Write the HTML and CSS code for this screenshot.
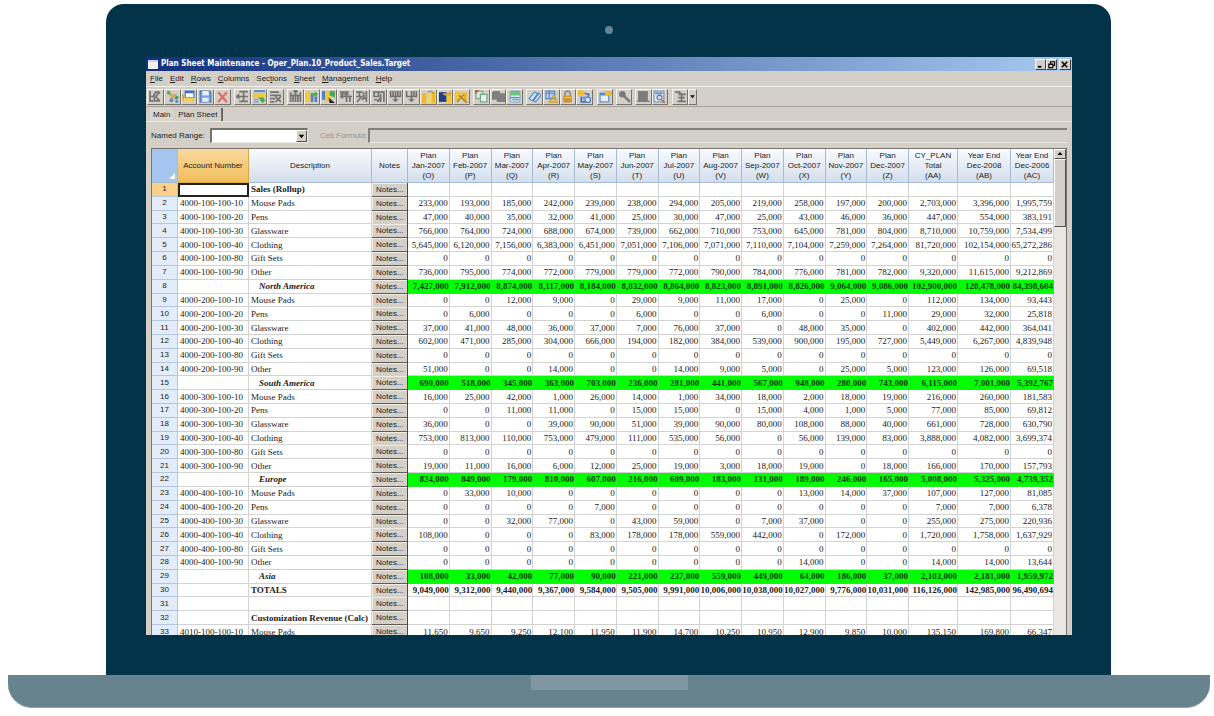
FILE: index.html
```html
<!DOCTYPE html>
<html lang="en">
<head>
<meta charset="utf-8">
<title>Plan Sheet Maintenance</title>
<link rel="stylesheet" href="styles.css">
</head>
<body>
<main class="laptop">
  <div class="lid">
    <span class="camera"></span>
    <section class="window">
      <header class="titlebar">
        <svg class="app-icon" viewBox="0 0 10 9"><rect width="10" height="9" fill="#f4f1ea"/><rect width="10" height="2" fill="#c9d3ec"/></svg>
        <h1 class="title">Plan Sheet Maintenance - Oper_Plan.10_Product_Sales.Target</h1>
        <div class="win-buttons">
          <button class="win-btn" aria-label="Minimize"><svg viewBox="0 0 10 9"><path d="M2 7h4" stroke="#000" stroke-width="2"/></svg></button>
          <button class="win-btn" aria-label="Restore"><svg viewBox="0 0 10 9"><path d="M4 3.5V1.500h4.500v4H7M4 1.500h4.500M2 4h4.500v4H2zM2 4.500h4.500" fill="none" stroke="#000" stroke-width="1.200"/></svg></button>
          <button class="win-btn win-close" aria-label="Close"><svg viewBox="0 0 10 9"><path d="M2 1.500l6 6M8 1.500l-6 6" stroke="#000" stroke-width="1.700"/></svg></button>
        </div>
      </header>

      <nav class="menubar">
        <button><u>F</u>ile</button>
        <button><u>E</u>dit</button>
        <button><u>R</u>ows</button>
        <button><u>C</u>olumns</button>
        <button>Sec<u>t</u>ions</button>
        <button><u>S</u>heet</button>
        <button><u>M</u>anagement</button>
        <button><u>H</u>elp</button>
      </nav>

      <div class="toolbar">
        <div class="group five">
          <button class="tool" aria-label="Refresh"><svg viewBox="0 0 12 12"><path d="M1 1v9h3M1 6h3l2-4h4M10 2L6 6M5 6v4h5M6 6l4 4" class="g"/></svg></button>
          <button class="tool" aria-label="New sheet"><svg viewBox="0 0 12 12"><path d="M2 3l4 3 4-2M6 6l-2 4M6 6l4 3" stroke="#7f9c8a" fill="none"/><circle cx="2.500" cy="2.500" r="1.700" fill="#58a868"/><circle cx="6" cy="5.500" r="2" fill="#e0b040"/><circle cx="10" cy="7" r="1.600" fill="#4a9e5c"/><circle cx="5" cy="9.500" r="1.800" fill="#5c8fd0"/><circle cx="10" cy="10.500" r="1.500" fill="#5c8fd0"/></svg></button>
          <button class="tool" aria-label="Open"><svg viewBox="0 0 12 12"><rect x="3" y="1" width="8" height="6" fill="#fff" stroke="#3a6cc0"/><path d="M3 2h8" stroke="#3a6cc0" stroke-width="2"/><path d="M0 4l2 1v4h9l-1 2H1z" fill="#d89a20"/><path d="M2 7h9l-1 4H1z" fill="#f4d050"/></svg></button>
          <button class="tool" aria-label="Save"><svg viewBox="0 0 12 12"><path d="M1 1h9l1 1v9H1z" fill="#6f9fe0" stroke="#4472b8"/><rect x="3" y="1" width="6" height="4" fill="#eef4ff"/><rect x="3" y="7" width="6" height="4" fill="#dfe9f8"/></svg></button>
          <button class="tool" aria-label="Delete"><svg viewBox="0 0 12 12"><path d="M2 2l8 9M10 2l-8 9" stroke="#dc7068" stroke-width="2"/></svg></button>
        </div>
        <div class="group three">
          <button class="tool" aria-label="Insert row"><svg viewBox="0 0 12 12"><path d="M3 1.500h8M0 6h11M3 10.500h8M7 2v9M3 4L1 6l2 2" class="g"/></svg></button>
          <button class="tool" aria-label="Copy row"><svg viewBox="0 0 12 12"><rect x="1" y="0" width="10" height="2" fill="#5b8ccc"/><rect y="3" width="11" height="4" fill="#f3c73c"/><path d="M4 7h6v2h2l-3 3-3-3h1z" fill="#3fae4f"/><path d="M1 9h4M1 11h4" stroke="#5b8ccc"/></svg></button>
          <button class="tool" aria-label="Delete row"><svg viewBox="0 0 12 12"><path d="M1 2h8M1 5h10M1 8h5M1 11h4M6 6l5 5M11 6l-5 5" class="g"/></svg></button>
        </div>
        <div class="group eleven">
          <button class="tool" aria-label="Insert column"><svg viewBox="0 0 12 12"><path d="M1.500 2v9M6 0v11M10.500 2v9M1 5h10M4 2l2-2 2 2M3.800 5v6M8.200 5v6" class="g"/></svg></button>
          <button class="tool" aria-label="Add column"><svg viewBox="0 0 12 12"><rect x="0" y="1" width="5" height="10" fill="#f2c93f"/><path d="M6.500 3v8M10 6v5" stroke="#5182cc" stroke-width="2.500"/><path d="M6 3h3V1l3 3-3 3V5H6z" fill="#43ad51"/></svg></button>
          <button class="tool" aria-label="Select column"><svg viewBox="0 0 12 12"><rect width="3" height="8" x="0" y="1" fill="#5182cc"/><rect x="3" y="1" width="5" height="10" fill="#f2c93f"/><path d="M7 1h5v6L7 5z" fill="#48a958"/><path d="M6 7l6 5H7z" fill="#222"/></svg></button>
          <button class="tool" aria-label="Row group"><svg viewBox="0 0 12 12"><path d="M1 2h8M1 6h11M3 2v6M7 2v9M10 5v6M1 4h8" class="g"/></svg></button>
          <button class="tool" aria-label="Move left"><svg viewBox="0 0 12 12"><path d="M1 2h6M4 2v4M1 6h6M2 11l4-5M10.500 1v10M8 2v7M6 9l4-2" class="g"/></svg></button>
          <button class="tool" aria-label="Move right"><svg viewBox="0 0 12 12"><path d="M1 2h10v9M2 2v4h4V2M8 4v7M5 11l3-4M2 9h3" class="g"/></svg></button>
          <button class="tool" aria-label="Expand"><svg viewBox="0 0 12 12"><path d="M1.500 1v5h9V1M6 1v10M3.500 9h5M3.800 1v5M8.200 1v5" class="g"/></svg></button>
          <button class="tool" aria-label="Collapse"><svg viewBox="0 0 12 12"><path d="M1.500 1v5h9V1M6 1v10M3.500 9h5M8.200 1v5" class="g"/></svg></button>
          <button class="tool" aria-label="Highlight columns"><svg viewBox="0 0 12 12"><rect y="3" width="4" height="9" fill="#eeb92e"/><rect x="5" y="3" width="3" height="9" fill="#f6d65c"/><rect x="9" y="2" width="3" height="10" fill="#eeb92e"/><path d="M5 2l3-1 3 2" stroke="#b08a28" fill="none"/></svg></button>
          <button class="tool" aria-label="Fill column"><svg viewBox="0 0 12 12"><rect y="2" width="7" height="9" fill="#223f8a"/><rect x="7" y="4" width="4" height="8" fill="#f1c431"/><path d="M3 3h5l3-2v4H5z" fill="#dca92b"/></svg></button>
          <button class="tool" aria-label="Clear column"><svg viewBox="0 0 12 12"><rect y="2" width="4" height="9" fill="#f1c431"/><rect x="8" y="2" width="3" height="9" fill="#e6b42c"/><path d="M2 11l7-8M4 5l7 7" stroke="#b78425" stroke-width="1.500"/><path d="M3 2h7v2H3z" fill="#f1c431"/></svg></button>
        </div>
        <div class="group three">
          <button class="tool" aria-label="Copy"><svg viewBox="0 0 12 12"><rect x="1" y="1" width="6" height="7" fill="#d3e8d8" stroke="#7ca389"/><rect x="5" y="4" width="6" height="7" fill="#e2f2e6" stroke="#6c9f80"/><path d="M0 0h4L0 4z" fill="#c0554a"/></svg></button>
          <button class="tool" aria-label="Paste"><svg viewBox="0 0 12 12"><path d="M0 2l2-1h5l1 2h4v8H5l-1-2H0z" fill="#808080"/></svg></button>
          <button class="tool" aria-label="Calendar"><svg viewBox="0 0 12 12"><rect x="2" y="1" width="9" height="10" rx="1" fill="#d6eaf6" stroke="#7ea6cf"/><path d="M2 1h9v4H2z" fill="#6cc57c"/><path d="M2 7h8M4 9h6" stroke="#568bcc"/></svg></button>
        </div>
        <div class="group four">
          <button class="tool" aria-label="Attach"><svg viewBox="0 0 12 12"><path d="M1 8l5-6 3 1-5 7zM5 10l5-7 2 2-5 6z" fill="#dbe9fb" stroke="#4d83cb"/></svg></button>
          <button class="tool" aria-label="Exceptions"><svg viewBox="0 0 12 12"><rect x="1" y="1" width="8" height="7" fill="#bfd6f5" stroke="#4a7fca"/><path d="M1 3h8M4 1v7" stroke="#4a7fca"/><path d="M8 4l2 3.500H6zM5.500 8l2 3.500h-4zM10 8l2 3.500H8z" fill="#eebd28" stroke="#b98d20" stroke-width=".5"/></svg></button>
          <button class="tool" aria-label="Lock"><svg viewBox="0 0 12 12"><path d="M3.500 6V3.500a2.500 2.500 0 015 0V6" fill="none" stroke="#8c8c8c" stroke-width="1.500"/><rect x="2" y="5" width="8" height="6.500" rx="1" fill="#cf9428"/><path d="M3 7h6" stroke="#f4ce6c"/></svg></button>
          <button class="tool" aria-label="Links"><svg viewBox="0 0 12 12"><path d="M0 0l6 1v4L0 5z" fill="#efbd2e"/><path d="M6 3l4 1-1 3M3 6v5h4" fill="none" stroke="#3f74c4" stroke-width="1.500"/><circle cx="9" cy="9" r="2.500" fill="#d9e7fa" stroke="#3f74c4"/><path d="M4 6h3v3H4z" fill="#6f9fe0"/></svg></button>
        </div>
        <div class="group one gap-wide">
          <button class="tool" aria-label="Properties"><svg viewBox="0 0 12 12"><rect x="1" y="3" width="8" height="8" fill="#e6effb" stroke="#4e85d0"/><path d="M1 4h8" stroke="#4e85d0" stroke-width="2"/><path d="M5 1h7v4H6z" fill="#efbd2e"/></svg></button>
        </div>
        <div class="group one">
          <button class="tool" aria-label="Find"><svg viewBox="0 0 12 12"><circle cx="4" cy="4" r="3" fill="#7c7c7c"/><path d="M5 5l6 6" stroke="#7c7c7c" stroke-width="2.500"/></svg></button>
        </div>
        <div class="group two">
          <button class="tool" aria-label="Stop"><svg viewBox="0 0 12 12"><path d="M1 1h9v9h2v1H0v-1h1z" fill="#7c7c7c"/></svg></button>
          <button class="tool" aria-label="Preview"><svg viewBox="0 0 12 12"><rect x="1" y="1" width="9" height="10" fill="#e8eef8" stroke="#7893b8"/><path d="M2 3h7" stroke="#6e9bd8" stroke-width="2"/><circle cx="6" cy="7" r="2.300" fill="#c7dcf7" stroke="#7a6f75"/><path d="M8 9l3 3" stroke="#b06a50" stroke-width="1.500"/></svg></button>
        </div>
        <div class="group tail gap-wide">
          <button class="tool" aria-label="Tools"><svg viewBox="0 0 12 12"><path d="M1 2h5M4 4h7M7 3v7M4 7h6M3 10.500h8M5 2l2 3" class="g"/></svg></button>
          <button class="tool more" aria-label="More tools"><svg viewBox="0 0 12 12"><path d="M2 4h8L6 9z" fill="#000"/></svg></button>
        </div>
      </div>

      <div class="tabs">
        <button class="tab">Main</button>
        <button class="tab active">Plan Sheet</button>
      </div>

      <div class="panel">
        <div class="formula-row">
          <label for="range">Named Range:</label>
          <div class="select-box">
            <select id="range"><option></option></select>
            <svg class="select-arrow" viewBox="0 0 10 11"><path d="M2 4h6L5 8z" fill="#000"/></svg>
          </div>
          <label class="dim" for="formula">Cell Formula:</label>
          <input id="formula" type="text" disabled>
        </div>
        <div class="grid-view">
          <table class="sheet">
            <colgroup>
              <col class="c-num"><col class="c-acct"><col class="c-desc"><col class="c-notes">
              <col span="12">
              <col class="c-total"><col class="c-end"><col class="c-prior">
            </colgroup>
            <thead>
              <tr>
                <th class="corner"><svg viewBox="0 0 6 6"><path d="M6 0v6H0z" fill="#fff"/></svg></th>
                <th class="picked">Account Number</th>
                <th>Description</th>
                <th>Notes</th>
                <th>Plan<br>Jan-2007<br>(O)</th>
                <th>Plan<br>Feb-2007<br>(P)</th>
                <th>Plan<br>Mar-2007<br>(Q)</th>
                <th>Plan<br>Apr-2007<br>(R)</th>
                <th>Plan<br>May-2007<br>(S)</th>
                <th>Plan<br>Jun-2007<br>(T)</th>
                <th>Plan<br>Jul-2007<br>(U)</th>
                <th>Plan<br>Aug-2007<br>(V)</th>
                <th>Plan<br>Sep-2007<br>(W)</th>
                <th>Plan<br>Oct-2007<br>(X)</th>
                <th>Plan<br>Nov-2007<br>(Y)</th>
                <th>Plan<br>Dec-2007<br>(Z)</th>
                <th>CY_PLAN<br>Total<br>(AA)</th>
                <th>Year End<br>Dec-2008<br>(AB)</th>
                <th>Year End<br>Dec-2006<br>(AC)</th>
              </tr>
            </thead>
            <tbody id="rows"></tbody>
          </table>
          <div class="scrollbar">
            <button class="scroll-up" aria-label="Scroll up"><svg viewBox="0 0 9 8"><path d="M2 5h5L4.500 2z" fill="#000"/></svg></button>
            <div class="thumb"></div>
          </div>
        </div>
      </div>
    </section>
  </div>
  <div class="base"><span class="notch"></span></div>
</main>
<script src="sheet.js"></script>
</body>
</html>
```
FILE: styles.css
```css
* { box-sizing: border-box; }

body {
  margin: 0;
  padding: 4px 4px 8px 8px;
  background: #fff;
  font-family: "Liberation Sans", Arial, sans-serif;
  font-size: 8px;
  color: #222;
}

button, input, select {
  margin: 0;
  padding: 0;
  border: 0;
  border-radius: 0;
  background: none;
  font: inherit;
  color: inherit;
}

/* Laptop frame */
.laptop { display: flex; flex-direction: column; }
.lid {
  margin: 0 99px 0 98px;
  padding: 22px 39px 40px 40px;
  background: #023349;
  border-radius: 18px 18px 0 0;
  display: flex;
  flex-direction: column;
}
.camera {
  width: 8px;
  height: 8px;
  margin: 0 auto 23px;
  border-radius: 50%;
  background: #67838d;
}
.base {
  height: 33px;
  background: #67838d;
  border-bottom: 1px solid #8ba0aa;
  border-radius: 0 0 24px 24px;
  display: flex;
  justify-content: center;
}
.notch { width: 157px; height: 15px; background: #8097a2; }

/* Application window */
.window { background: #d4d0c8; overflow: hidden; }
.titlebar {
  display: flex;
  align-items: center;
  height: 14px;
  padding: 0 1px 0 2px;
  gap: 3px;
  background: linear-gradient(90deg, #12307c, #a6caf0);
}
.app-icon { width: 10px; height: 9px; }
.title {
  flex: 1;
  margin: 0;
  font-family: "DejaVu Sans Condensed", "DejaVu Sans", sans-serif;
  font-size: 8px;
  font-weight: bold;
  line-height: 14px;
  color: #fff;
  white-space: nowrap;
}
.win-buttons { display: flex; }
.win-btn {
  width: 11px;
  height: 11px;
  background: #d4d0c8;
  border: 1px solid;
  border-color: #fff #404040 #404040 #fff;
}
.win-btn svg { display: block; width: 9px; height: 9px; }
.win-close { margin-left: 2px; width: 12px; }

.menubar {
  display: flex;
  gap: 7px;
  height: 15px;
  padding: 0 4px;
  line-height: 14px;
}

.toolbar {
  display: flex;
  align-items: center;
  gap: 3px;
  height: 21px;
  padding: 0 1px;
  border-top: 1px solid #f2f0ec;
  border-bottom: 1px solid #a5a19a;
}
.group { display: flex; }
.one { width: 16px; }
.two { width: 33px; }
.three { width: 50px; }
.four { width: 67px; }
.five { width: 84px; }
.eleven { width: 183px; }
.tail { width: 25px; }
.gap-wide { margin-left: 1px; }
.tool {
  flex: 1;
  height: 16px;
  display: flex;
  align-items: center;
  justify-content: center;
  border: 1px solid;
  border-color: #f4f2ee #77736c #77736c #f4f2ee;
}
.tool svg { width: 13px; height: 13px; flex: none; }
.tool .g { fill: none; stroke: #747474; stroke-width: 1.6; }
.tool.more { flex: none; width: 9px; }
.tool.more svg { width: 7px; height: 7px; }

.tabs {
  display: flex;
  height: 15px;
  padding: 1px 4px 0;
  gap: 2px;
  border-bottom: 1px solid #eceae5;
}
.tab { padding: 0 3px; line-height: 14px; background: #dad6cf; }
.tab.active { padding-right: 4px; background: #d4d0c8; border-right: 2px solid #6a6762; }

.panel { padding: 0 5px; }
.formula-row {
  display: flex;
  align-items: center;
  height: 26px;
}
.formula-row label { width: 59px; white-space: nowrap; }
.formula-row .dim { width: 48px; margin-left: 12px; color: #98948d; }
.select-box { position: relative; width: 98px; height: 15px; }
.select-box select {
  width: 100%;
  height: 100%;
  appearance: none;
  background: #fff;
  border: 1px solid;
  border-width: 2px 1px 1px 2px;
  border-color: #77736c #eceae5 #eceae5 #77736c;
}
.select-arrow {
  position: absolute;
  top: 2px;
  right: 1px;
  width: 11px;
  height: 12px;
  background: #d4d0c8;
  border: 1px solid;
  border-color: #fff #55524d #55524d #fff;
  pointer-events: none;
}
#formula {
  flex: 1;
  min-width: 0;
  height: 15px;
  border: 1px solid;
  border-width: 2px 0 1px 2px;
  border-color: #85817a #eceae5 #eceae5 #85817a;
}

/* Worksheet */
.grid-view {
  display: flex;
  height: 487px;
  overflow: hidden;
  border: solid #77736c;
  border-width: 1px 1px 0 1px;
}
.sheet {
  flex: 1;
  width: 100%;
  height: 490px;
  table-layout: fixed;
  border-collapse: separate;
  border-spacing: 0;
  background: #fff;
  font-family: "Liberation Serif", "Times New Roman", serif;
  font-size: 9px;
  line-height: 12px;
}
.c-num { width: 26px; }
.c-acct { width: 71px; }
.c-desc { width: 123px; }
.c-notes { width: 36px; }
.c-total { width: 49px; }
.c-end { width: 53px; }
.c-prior { width: 43px; }

.sheet th, .sheet td {
  padding: 0;
  border: solid #d3d3d3;
  border-width: 0 1px 1px 0;
  white-space: nowrap;
}
.sheet th {
  font: 8px/10px "Liberation Sans", Arial, sans-serif;
  text-align: center;
}
.sheet thead th {
  height: 34px;
  background: linear-gradient(#f8fbff, #d3deec);
  border-color: #a9bbd2;
}
.sheet thead .picked {
  background: linear-gradient(#fad9a0, #f0be5a);
  border-color: #d9a648;
}
.sheet thead .corner {
  background: #a3c5ee;
  text-align: right;
  vertical-align: bottom;
}
.corner svg { width: 6px; height: 6px; margin: 0 2px 0 0; display: inline-block; }
.sheet tbody th { background: #e3edf9; border-color: #b3c6de; }
.sheet tbody .picked { background: #fbd08a; }
.sheet td { text-align: right; padding-right: 1px; }
.sheet .text { text-align: left; padding-left: 2px; }
.sheet .cursor { border: 2px solid #222; }
.sheet .note-cell {
  padding: 0;
  background: #5f5c58;
  border-color: #4d4a47;
  border-bottom: 0;
  vertical-align: top;
}
.note {
  display: block;
  width: 100%;
  height: 13px;
  font: 8px/12px "Liberation Sans", Arial, sans-serif;
  text-align: left;
  padding-left: 3px;
  background: #d4d0c8;
  border: solid #efece6;
  border-width: 1px 0 0 1px;
}
.strong td { font-weight: bold; padding-right: 0; }
.section .text { font-weight: bold; }
.sheet .region .text { font-style: italic; padding-left: 10px; }
.sheet .region .num { background: #00ff00; border-color: #2fe32f; color: #003c00; }

.scrollbar { width: 12px; flex: none; background: #e9e7e3; }
.scroll-up, .thumb {
  display: block;
  width: 12px;
  background: #d4d0c8;
  border: 1px solid;
  border-color: #fff #55524d #55524d #fff;
}
.scroll-up { height: 10px; }
.scroll-up svg { display: block; width: 10px; height: 8px; }
.thumb { height: 68px; }
```
FILE: sheet.js
```js
// kind | account | description | values
const data = [
  "section||Sales (Rollup)|",
  "|4000-100-100-10|Mouse Pads|233,000 193,000 185,000 242,000 239,000 238,000 294,000 205,000 219,000 258,000 197,000 200,000 2,703,000 3,396,000 1,995,759",
  "|4000-100-100-20|Pens|47,000 40,000 35,000 32,000 41,000 25,000 30,000 47,000 25,000 43,000 46,000 36,000 447,000 554,000 383,191",
  "|4000-100-100-30|Glassware|766,000 764,000 724,000 688,000 674,000 739,000 662,000 710,000 753,000 645,000 781,000 804,000 8,710,000 10,759,000 7,534,499",
  "|4000-100-100-40|Clothing|5,645,000 6,120,000 7,156,000 6,383,000 6,451,000 7,051,000 7,106,000 7,071,000 7,110,000 7,104,000 7,259,000 7,264,000 81,720,000 102,154,000 65,272,286",
  "|4000-100-100-80|Gift Sets|0 0 0 0 0 0 0 0 0 0 0 0 0 0 0",
  "|4000-100-100-90|Other|736,000 795,000 774,000 772,000 779,000 779,000 772,000 790,000 784,000 776,000 781,000 782,000 9,320,000 11,615,000 9,212,869",
  "strong region||North America|7,427,000 7,912,000 8,874,000 8,117,000 8,184,000 8,832,000 8,864,000 8,823,000 8,891,000 8,826,000 9,064,000 9,086,000 102,900,000 128,478,000 84,398,604",
  "|4000-200-100-10|Mouse Pads|0 0 12,000 9,000 0 29,000 9,000 11,000 17,000 0 25,000 0 112,000 134,000 93,443",
  "|4000-200-100-20|Pens|0 6,000 0 0 0 6,000 0 0 6,000 0 0 11,000 29,000 32,000 25,818",
  "|4000-200-100-30|Glassware|37,000 41,000 48,000 36,000 37,000 7,000 76,000 37,000 0 48,000 35,000 0 402,000 442,000 364,041",
  "|4000-200-100-40|Clothing|602,000 471,000 285,000 304,000 666,000 194,000 182,000 384,000 539,000 900,000 195,000 727,000 5,449,000 6,267,000 4,839,948",
  "|4000-200-100-80|Gift Sets|0 0 0 0 0 0 0 0 0 0 0 0 0 0 0",
  "|4000-200-100-90|Other|51,000 0 0 14,000 0 0 14,000 9,000 5,000 0 25,000 5,000 123,000 126,000 69,518",
  "strong region||South America|690,000 518,000 345,000 363,000 703,000 236,000 281,000 441,000 567,000 948,000 280,000 743,000 6,115,000 7,001,000 5,392,767",
  "|4000-300-100-10|Mouse Pads|16,000 25,000 42,000 1,000 26,000 14,000 1,000 34,000 18,000 2,000 18,000 19,000 216,000 260,000 181,583",
  "|4000-300-100-20|Pens|0 0 11,000 11,000 0 15,000 15,000 0 15,000 4,000 1,000 5,000 77,000 85,000 69,812",
  "|4000-300-100-30|Glassware|36,000 0 0 39,000 90,000 51,000 39,000 90,000 80,000 108,000 88,000 40,000 661,000 728,000 630,790",
  "|4000-300-100-40|Clothing|753,000 813,000 110,000 753,000 479,000 111,000 535,000 56,000 0 56,000 139,000 83,000 3,888,000 4,082,000 3,699,374",
  "|4000-300-100-80|Gift Sets|0 0 0 0 0 0 0 0 0 0 0 0 0 0 0",
  "|4000-300-100-90|Other|19,000 11,000 16,000 6,000 12,000 25,000 19,000 3,000 18,000 19,000 0 18,000 166,000 170,000 157,793",
  "strong region||Europe|824,000 849,000 179,000 810,000 607,000 216,000 609,000 183,000 131,000 189,000 246,000 165,000 5,008,000 5,325,000 4,739,352",
  "|4000-400-100-10|Mouse Pads|0 33,000 10,000 0 0 0 0 0 0 13,000 14,000 37,000 107,000 127,000 81,085",
  "|4000-400-100-20|Pens|0 0 0 0 7,000 0 0 0 0 0 0 0 7,000 7,000 6,378",
  "|4000-400-100-30|Glassware|0 0 32,000 77,000 0 43,000 59,000 0 7,000 37,000 0 0 255,000 275,000 220,936",
  "|4000-400-100-40|Clothing|108,000 0 0 0 83,000 178,000 178,000 559,000 442,000 0 172,000 0 1,720,000 1,758,000 1,637,929",
  "|4000-400-100-80|Gift Sets|0 0 0 0 0 0 0 0 0 0 0 0 0 0 0",
  "|4000-400-100-90|Other|0 0 0 0 0 0 0 0 0 14,000 0 0 14,000 14,000 13,644",
  "strong region||Asia|108,000 33,000 42,000 77,000 90,000 221,000 237,000 559,000 449,000 64,000 186,000 37,000 2,103,000 2,181,000 1,959,972",
  "strong||TOTALS|9,049,000 9,312,000 9,440,000 9,367,000 9,584,000 9,505,000 9,991,000 10,006,000 10,038,000 10,027,000 9,776,000 10,031,000 116,126,000 142,985,000 96,490,694",
  "|||",
  "section||Customization Revenue (Calc)|",
  "|4010-100-100-10|Mouse Pads|11,650 9,650 9,250 12,100 11,950 11,900 14,700 10,250 10,950 12,900 9,850 10,000 135,150 169,800 66,347"
];

const body = document.getElementById("rows");

data.forEach((line, index) => {
  const [kind, account, description, values] = line.split("|");
  const numbers = values ? values.split(" ") : Array(15).fill("");
  const first = index === 0;
  const row = document.createElement("tr");
  row.className = kind;
  row.innerHTML =
    `<th${first ? ' class="picked"' : ""}>${index + 1}</th>` +
    `<td class="${first ? "text cursor" : "text"}">${account}</td>` +
    `<td class="text">${description}</td>` +
    `<td class="note-cell"><button class="note">Notes...</button></td>` +
    numbers.map(n => `<td class="num">${n}</td>`).join("");
  body.appendChild(row);
});
```
